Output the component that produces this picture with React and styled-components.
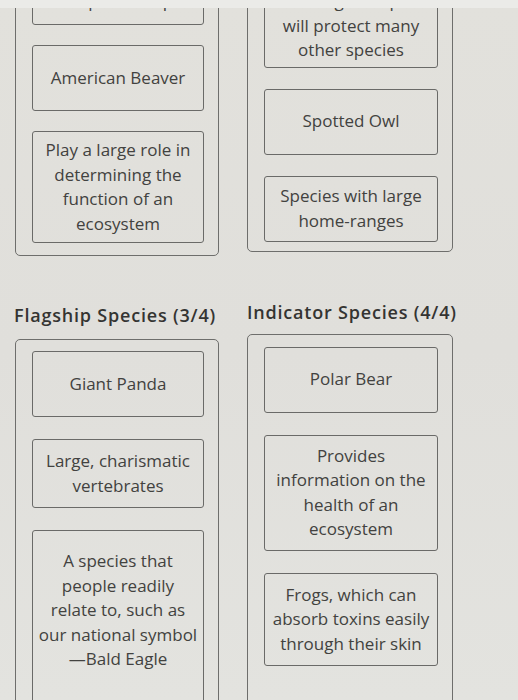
import React from "react";
import styled, { createGlobalStyle } from "styled-components";

const GlobalStyle = createGlobalStyle`
  html, body { margin: 0; padding: 0; background: #e0dfdb; }
  * { box-sizing: border-box; }
`;

const Screen = styled.div`
  position: relative;
  width: 518px;
  height: 700px;
  overflow: hidden;
  background: linear-gradient(180deg, #e2e1dc 0%, #e0dfdb 50%, #e3e3df 100%);
  font-family: "Open Sans", "Liberation Sans", sans-serif;
  color: #444442;
`;

const TopBand = styled.div`
  position: absolute;
  top: 0;
  left: 0;
  right: 0;
  height: 8px;
  background: #ebebe8;
  z-index: 2;
`;

const Columns = styled.div`
  display: grid;
  grid-template-columns: 204px 206px;
  column-gap: 28px;
  padding-left: 15px;
  align-items: start;
`;

const Column = styled.div`
  display: flex;
  flex-direction: column;
`;

const Bin = styled.div`
  display: flex;
  flex-direction: column;
  gap: ${(p) => p.$gap ?? 21}px;
  margin-top: ${(p) => p.$mt ?? 0}px;
  padding: ${(p) => p.$pt ?? 11}px 14px ${(p) => p.$pb ?? 10}px 16px;
  border: 1.5px solid #6e6e6c;
  border-radius: 5px;
`;

const Card = styled.div`
  min-height: 66px;
  display: flex;
  align-items: center;
  justify-content: center;
  padding: ${(p) => p.$pad || "8px 2px"};
  border: 1.5px solid #6a6a68;
  border-radius: 3px;
  text-align: center;
  white-space: nowrap;
  font-size: 17px;
  line-height: 24.5px;
  color: #424240;
`;

const Heading = styled.h2`
  margin: ${(p) => p.$mt}px 0 ${(p) => p.$mb}px ${(p) => p.$ml ?? 0}px;
  font-size: 18px;
  line-height: 24px;
  font-weight: 600;
  letter-spacing: 0.8px;
  color: #343432;
  white-space: nowrap;
`;

export default function App() {
  return (
    <>
      <GlobalStyle />
      <Screen>
        <TopBand />
        <Columns>
          <Column>
            <Bin $mt={-57} $gap={20} $pb={12}>
              <Card $pad="8px 2px 11px">
                Species on which
                <br />
                other species depend
              </Card>
              <Card>American Beaver</Card>
              <Card $pad="6px 2px">
                Play a large role in
                <br />
                determining the
                <br />
                function of an
                <br />
                ecosystem
              </Card>
            </Bin>
            <Heading $mt={47} $mb={12} $ml={-1}>
              Flagship Species (3/4)
            </Heading>
            <Bin $pt={11} $gap={22} $pb={40}>
              <Card>Giant Panda</Card>
              <Card $pad="9px 2px">
                Large, charismatic
                <br />
                vertebrates
              </Card>
              <Card $pad="18px 2px 40px">
                A species that
                <br />
                people readily
                <br />
                relate to, such as
                <br />
                our national symbol
                <br />
                —Bald Eagle
              </Card>
            </Bin>
          </Column>
          <Column>
            <Bin $mt={-33} $pb={9}>
              <Card $pad="9px 2px 4px">
                Protecting this species
                <br />
                will protect many
                <br />
                other species
              </Card>
              <Card>Spotted Owl</Card>
              <Card $pad="6px 2px">
                Species with large
                <br />
                home-ranges
              </Card>
            </Bin>
            <Heading $mt={48} $mb={10}>
              Indicator Species (4/4)
            </Heading>
            <Bin $pt={12} $gap={22} $pb={40}>
              <Card>Polar Bear</Card>
              <Card>
                Provides
                <br />
                information on the
                <br />
                health of an
                <br />
                ecosystem
              </Card>
              <Card $pad="9px 2px">
                Frogs, which can
                <br />
                absorb toxins easily
                <br />
                through their skin
              </Card>
            </Bin>
          </Column>
        </Columns>
      </Screen>
    </>
  );
}
